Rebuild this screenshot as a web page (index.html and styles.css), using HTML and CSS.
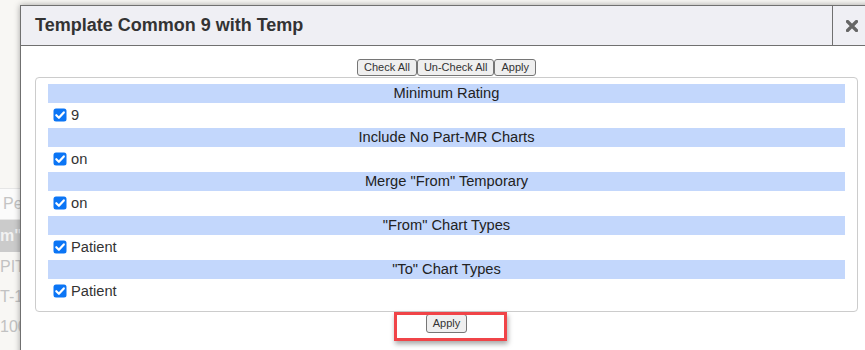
FILE: index.html
```html
<!DOCTYPE html>
<html>
<head>
<meta charset="utf-8">
<link rel="stylesheet" href="styles.css">
</head>
<body>
<div class="page">
  <div class="bg-top"></div>
  <div class="bg-list">
    <div class="bg-input">Pe</div>
    <div class="bg-head">m" I</div>
    <div class="bg-row">PIT</div>
    <div class="bg-row">T-10</div>
    <div class="bg-row">100</div>
  </div>

  <div class="dialog">
    <div class="dialog-title">
      <div class="title-text">Template Common 9 with Temp</div>
      <div class="close">
        <svg width="12" height="12" viewBox="0 0 12 12"><path d="M1.5 1.5 L10.5 10.5 M10.5 1.5 L1.5 10.5" stroke="#666" stroke-width="3.2" stroke-linecap="round"/></svg>
      </div>
    </div>
    <div class="dialog-body">
      <div class="toolbar"><button class="btn">Check All</button><button class="btn">Un-Check All</button><button class="btn">Apply</button></div>
      <div class="box">
        <div class="group">
          <div class="band">Minimum Rating</div>
          <label class="row"><span class="cb"><svg width="14" height="14" viewBox="0 0 14 14"><rect x="0.5" y="0.5" width="13" height="13" rx="2.5" fill="#0b75f5"/><path d="M3.3 7.2 L5.9 9.8 L10.8 4.4" fill="none" stroke="#fff" stroke-width="2.2" stroke-linecap="round" stroke-linejoin="round"/></svg></span><span>9</span></label>
        </div>
        <div class="group">
          <div class="band">Include No Part-MR Charts</div>
          <label class="row"><span class="cb"><svg width="14" height="14" viewBox="0 0 14 14"><rect x="0.5" y="0.5" width="13" height="13" rx="2.5" fill="#0b75f5"/><path d="M3.3 7.2 L5.9 9.8 L10.8 4.4" fill="none" stroke="#fff" stroke-width="2.2" stroke-linecap="round" stroke-linejoin="round"/></svg></span><span>on</span></label>
        </div>
        <div class="group">
          <div class="band">Merge "From" Temporary</div>
          <label class="row"><span class="cb"><svg width="14" height="14" viewBox="0 0 14 14"><rect x="0.5" y="0.5" width="13" height="13" rx="2.5" fill="#0b75f5"/><path d="M3.3 7.2 L5.9 9.8 L10.8 4.4" fill="none" stroke="#fff" stroke-width="2.2" stroke-linecap="round" stroke-linejoin="round"/></svg></span><span>on</span></label>
        </div>
        <div class="group">
          <div class="band">"From" Chart Types</div>
          <label class="row"><span class="cb"><svg width="14" height="14" viewBox="0 0 14 14"><rect x="0.5" y="0.5" width="13" height="13" rx="2.5" fill="#0b75f5"/><path d="M3.3 7.2 L5.9 9.8 L10.8 4.4" fill="none" stroke="#fff" stroke-width="2.2" stroke-linecap="round" stroke-linejoin="round"/></svg></span><span>Patient</span></label>
        </div>
        <div class="group">
          <div class="band">"To" Chart Types</div>
          <label class="row"><span class="cb"><svg width="14" height="14" viewBox="0 0 14 14"><rect x="0.5" y="0.5" width="13" height="13" rx="2.5" fill="#0b75f5"/><path d="M3.3 7.2 L5.9 9.8 L10.8 4.4" fill="none" stroke="#fff" stroke-width="2.2" stroke-linecap="round" stroke-linejoin="round"/></svg></span><span>Patient</span></label>
        </div>
      </div>
      <div class="footer"><button class="btn">Apply</button></div>
    </div>
  </div>

  <div class="highlight"></div>
</div>
</body>
</html>
```

FILE: styles.css
```css
html, body {
  margin: 0;
  padding: 0;
  background: #f8f7f4;
  overflow: hidden;
  font-family: "Liberation Sans", Arial, sans-serif;
}

.page {
  position: relative;
  width: 865px;
  height: 350px;
  overflow: hidden;
}

.bg-top {
  height: 188px;
}

.bg-list {
  width: 120px;
  color: #bdbdbd;
  font-size: 16px;
}

.bg-input {
  height: 30px;
  line-height: 30px;
  padding-left: 3px;
  border: 1px solid #e6e6e6;
  border-left: none;
  background: #fbfbfb;
  color: #c4c4c4;
}

.bg-head {
  height: 32px;
  line-height: 32px;
  background: #cbcbcb;
  color: #f2f2f2;
  font-weight: bold;
}

.bg-row {
  height: 30px;
  line-height: 30px;
  color: #c2c2c2;
}

.dialog {
  position: absolute;
  left: 20px;
  top: 5px;
  width: 851px;
  height: 400px;
  background: #fff;
  border: 1px solid #707070;
  box-shadow: 0 0 6px rgba(0, 0, 0, 0.35);
}

.dialog-title {
  display: flex;
  height: 39px;
  background: #efeff4;
  border-bottom: 1px solid #707070;
}

.title-text {
  flex: 1;
  display: flex;
  align-items: center;
  padding-left: 14px;
  font-size: 18px;
  font-weight: bold;
  color: #333;
}

.close {
  width: 39px;
  border-left: 1px solid #707070;
  display: flex;
  align-items: center;
  justify-content: center;
}

.close svg {
  margin-left: -1px;
}

.dialog-body {
  padding: 0 14px;
}

.toolbar {
  display: flex;
  justify-content: center;
  padding-top: 13px;
  padding-bottom: 1px;
}

.btn {
  font-family: "Liberation Sans", Arial, sans-serif;
  font-size: 11px;
  color: #333;
  background: #efefef;
  border: 1px solid #767676;
  border-radius: 3px;
  padding: 1px 6px;
  margin: 0;
  line-height: 13px;
}

.box {
  border: 1px solid #cccccc;
  border-radius: 4px;
  padding: 6px 12px 7px 12px;
}

.band {
  height: 18.5px;
  line-height: 18.5px;
  background: #c3d7fc;
  text-align: center;
  font-size: 14.67px;
  color: #222;
}

.row {
  display: flex;
  align-items: center;
  height: 25.5px;
  font-size: 14.67px;
  color: #333;
}

.cb {
  display: flex;
  margin: 0 4px 0 5px;
}

.footer {
  display: flex;
  justify-content: center;
  padding-top: 2px;
}

.footer .btn {
  padding: 2px 6px;
}

.highlight {
  position: absolute;
  left: 394px;
  top: 312px;
  width: 107px;
  height: 23px;
  border: 3px solid #f04448;
  box-shadow: 1px 3px 5px rgba(0, 0, 0, 0.35);
}
```
